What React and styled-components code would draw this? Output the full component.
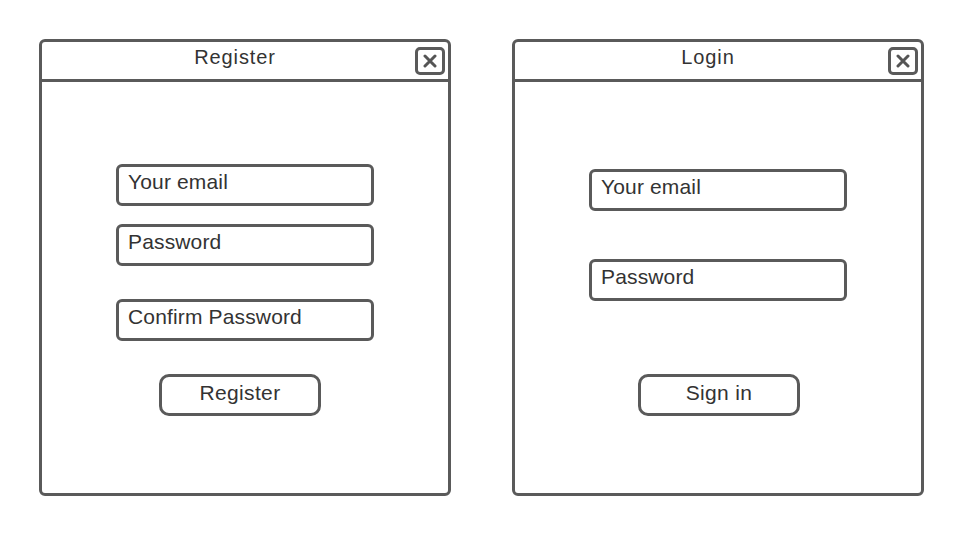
import React from 'react'
import styled, { createGlobalStyle } from 'styled-components'

const GlobalStyle = createGlobalStyle`
    body {
        margin: 0;
        background: #fff;
        font-family: "Liberation Sans", Arial, sans-serif;
        color: #333;
    }
`

const Close = () => (
    <CloseBox>
        <svg width="14" height="14" viewBox="0 0 14 14">
            <path d="M2 2 L12 12 M12 2 L2 12" stroke="#555" strokeWidth="3" strokeLinecap="round" fill="none" />
        </svg>
    </CloseBox>
)

const Dialog = ({ title, top, fields, button, buttonTop, buttonLeft }) => (
    <Panel>
        <Header>
            <Title>{title}</Title>
            <Close />
        </Header>
        <Form $top={top}>
            {fields.map(f => (
                <Field key={f.label} $gap={f.gap}>{f.label}</Field>
            ))}
            <Button $gap={buttonTop} $left={buttonLeft}>{button}</Button>
        </Form>
    </Panel>
)

export default function App() {
    return (
        <Page>
            <GlobalStyle />
            <Dialog
                title="Register"
                top={82}
                fields={[
                    { label: 'Your email', gap: 0 },
                    { label: 'Password', gap: 18 },
                    { label: 'Confirm Password', gap: 33 },
                ]}
                button="Register"
                buttonTop={33}
                buttonLeft={43}
            />
            <Dialog
                title="Login"
                top={87}
                fields={[
                    { label: 'Your email', gap: 0 },
                    { label: 'Password', gap: 48 },
                ]}
                button="Sign in"
                buttonTop={73}
                buttonLeft={49}
            />
        </Page>
    )
}

const Page = styled.div`
    display: flex;
    gap: 61px;
    padding: 39px 0 0 39px;
`
const Panel = styled.div`
    width: 412px;
    height: 457px;
    box-sizing: border-box;
    border: 3px solid #5a5a5a;
    border-radius: 6px;
    display: flex;
    flex-direction: column;
`
const Header = styled.div`
    height: 40px;
    box-sizing: border-box;
    border-bottom: 3px solid #5a5a5a;
    display: flex;
    align-items: center;
`
const Title = styled.div`
    flex: 1;
    align-self: flex-start;
    margin-top: 4px;
    padding-left: 13px;
    text-align: center;
    font-size: 20px;
    line-height: 23px;
    letter-spacing: 0.9px;
    color: #333;
`
const CloseBox = styled.div`
    width: 30px;
    height: 28px;
    margin-right: 3px;
    box-sizing: border-box;
    border: 3px solid #5a5a5a;
    border-radius: 5px;
    display: flex;
    align-items: center;
    justify-content: center;
`
const Form = styled.div`
    width: 258px;
    margin: 0 auto;
    padding-top: ${p => p.$top}px;
    display: flex;
    flex-direction: column;
    align-items: flex-start;
`
const Field = styled.div`
    width: 258px;
    height: 42px;
    margin-top: ${p => p.$gap}px;
    box-sizing: border-box;
    border: 3px solid #5a5a5a;
    border-radius: 6px;
    padding: 3px 0 0 9px;
    font-size: 21px;
    line-height: 24px;
    letter-spacing: 0.15px;
    color: #333;
`
const Button = styled.div`
    width: 162px;
    height: 42px;
    margin: ${p => p.$gap}px 0 0 ${p => p.$left}px;
    box-sizing: border-box;
    border: 3px solid #5a5a5a;
    border-radius: 10px;
    display: flex;
    align-items: center;
    justify-content: center;
    padding-bottom: 4px;
    font-size: 21px;
    letter-spacing: 0.35px;
    color: #333;
`
